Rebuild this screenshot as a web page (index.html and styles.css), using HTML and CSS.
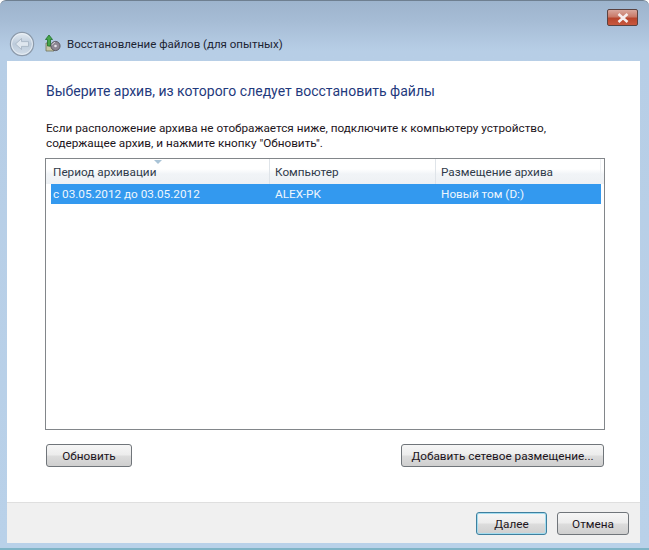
FILE: index.html
```html
<!DOCTYPE html>
<html lang="ru">
<head>
<meta charset="utf-8">
<title>Восстановление файлов</title>
<link rel="stylesheet" href="styles.css">
</head>
<body>
<div class="window">
  <div class="caption">
    <button class="close" aria-label="Закрыть">
      <svg width="14" height="10" viewBox="0 0 14 10"><path d="M2.5 1 L11.5 9 M11.5 1 L2.5 9" stroke="#f6eeee" stroke-width="2.6" fill="none"/></svg>
    </button>
  </div>
  <div class="nav">
    <svg class="back" width="26" height="26" viewBox="0 0 26 26">
      <defs>
        <linearGradient id="bk" x1="0" y1="0" x2="0" y2="1"><stop offset="0" stop-color="#e4ebf2"/><stop offset="0.5" stop-color="#bccbdb"/><stop offset="1" stop-color="#d3dee9"/></linearGradient>
      </defs>
      <circle cx="13" cy="13" r="11.6" fill="url(#bk)" stroke="#8c9aaa" stroke-width="1.2"/>
      <circle cx="13" cy="13" r="10.4" fill="none" stroke="#eef3f8" stroke-width="0.8"/>
      <path d="M6.5 13 L12.5 7.5 V10.6 H19.5 V15.4 H12.5 V18.5 Z" fill="#dfe7ef" stroke="#a3b1c0" stroke-width="0.8"/>
    </svg>
    <svg class="appicon" width="18" height="20" viewBox="0 0 18 20">
      <path d="M3 17 H11 V12 H6 V9 H3 Z" fill="#c7c6a8" stroke="#6f7359" stroke-width="0.8"/>
      <path d="M4.5 12 V5.5 H2.5 L6 1 L9.5 5.5 H7.5 V12 Z" fill="#45a54a" stroke="#1f6f2b" stroke-width="0.8"/>
      <circle cx="12.5" cy="12" r="4.6" fill="#8d8794" stroke="#4a4650" stroke-width="0.8"/>
      <circle cx="12.5" cy="12" r="1.3" fill="#e6e3ea"/>
      <path d="M8.5 11 L12 8" stroke="#d5d2da" stroke-width="1"/>
    </svg>
    <span class="nav-title">Восстановление файлов (для опытных)</span>
  </div>
  <div class="client">
    <div class="main">
      <h1 class="heading">Выберите архив, из которого следует восстановить файлы</h1>
      <p class="intro">Если расположение архива не отображается ниже, подключите к компьютеру устройство,<br>содержащее архив, и нажмите кнопку "Обновить".</p>
      <div class="list">
        <div class="list-head">
          <div class="col col-a">Период архивации<span class="sort"></span></div>
          <div class="col col-b">Компьютер</div>
          <div class="col col-c">Размещение архива</div>
        </div>
        <div class="row">
          <div class="cell col-a">с 03.05.2012 до 03.05.2012</div>
          <div class="cell col-b">ALEX-PK</div>
          <div class="cell col-c">Новый том (D:)</div>
        </div>
      </div>
      <div class="actions">
        <button class="btn btn-refresh">Обновить</button>
        <button class="btn btn-add">Добавить сетевое размещение...</button>
      </div>
    </div>
    <div class="footer">
      <button class="btn btn-next">Далее</button>
      <button class="btn btn-cancel">Отмена</button>
    </div>
  </div>
</div>
</body>
</html>
```
FILE: styles.css
```css
* { box-sizing: border-box; }
html, body { margin: 0; padding: 0; }
body { width: 649px; height: 550px; overflow: hidden; background: #fff; font-family: Roboto, "Noto Sans", sans-serif; }
.window {
  width: 649px; height: 550px; display: flex; flex-direction: column;
  border-radius: 6px 6px 0 0; border-top: 1px solid #6e7f90; border-bottom: 2px solid #7fb4c6;
  background: linear-gradient(to bottom, #9db4cd 0, #a6bcd5 20px, #b7cee6 50px, #b9d1e9 100%);
  padding: 0 9px 5px 7px;
}
.caption { height: 26px; flex: none; display: flex; justify-content: flex-end; align-items: flex-start; }
.close {
  width: 31px; height: 17px; margin: 8px 2px 0 0; padding: 0; display: flex; align-items: center; justify-content: center;
  border: 1px solid #5a4240; border-radius: 2px;
  background: linear-gradient(to bottom, #d9a79c 0, #c97a68 45%, #b8452c 55%, #c9583e 100%);
}
.nav { height: 34px; flex: none; display: flex; align-items: center; margin-left: 2px; }
.back { flex: none; margin-right: 8px; }
.appicon { flex: none; margin-right: 6px; }
.nav-title { font-size: 11.5px; color: #1c2433; }
.client { flex: 1; min-height: 0; display: flex; flex-direction: column; background: #fff; }
.main { flex: 1; min-height: 0; padding: 19px 35px 0 38px; display: flex; flex-direction: column; }
.heading { margin: 0 0 0 1px; font-size: 14px; line-height: 22px; font-weight: 400; color: #1f3a7d; white-space: nowrap; }
.intro { margin: 19px 0 0 1px; font-size: 11.75px; line-height: 15px; color: #1c1420; white-space: nowrap; }
.list { margin-top: 7px; height: 272px; border: 1px solid #82868a; font-size: 11.75px; flex: none; }
.list-head { display: flex; height: 25px; background: linear-gradient(to bottom, #fff 0, #fff 40%, #f1f4f7 60%, #eef1f4 100%); color: #2f3a4a; }
.col { position: relative; height: 100%; display: flex; align-items: center; padding-left: 5px; border-right: 1px solid #dfe4e9; }
.col-a { width: 224px; padding-left: 7px; }
.col-b { width: 166px; }
.col-c { width: 165px; }
.col.col-c { border-right-color: #eef1f4; }
.sort {
  position: absolute; top: 1px; left: 108px; width: 0; height: 0;
  border-left: 4px solid transparent; border-right: 4px solid transparent; border-top: 4px solid #a9c3d6;
}
.row { display: flex; height: 20px; margin: 0 3px 0 5px; background: #3399ef; color: #eef6fd; align-items: center; }
.cell { padding-left: 2px; }
.row .col-a { width: 219px; }
.row .col-b { width: 166px; padding-left: 5px; }
.row .col-c { width: 160px; padding-left: 5px; }
.actions { display: flex; justify-content: space-between; margin-top: 14px; padding: 0 1px; }
.btn {
  height: 23px; padding: 0; font: 11.75px Roboto, "Noto Sans", sans-serif; color: #1c1420;
  border: 1px solid #70757a; border-radius: 3px;
  background: linear-gradient(to bottom, #f6f6f6 0, #ececec 48%, #dcdcdc 52%, #cfcfcf 100%);
}
.btn-refresh { width: 86px; }
.btn-add { width: 203px; }
.footer { height: 41px; flex: none; display: flex; justify-content: flex-end; gap: 10px; padding: 9px 11px 0 0; background: #f0f0f0; border-top: 1px solid #dfdfdf; }
.btn-next { width: 71px; border-color: #3e7f9e; box-shadow: inset 0 0 0 1px #a3dcef; }
.btn-cancel { width: 72px; }
```
